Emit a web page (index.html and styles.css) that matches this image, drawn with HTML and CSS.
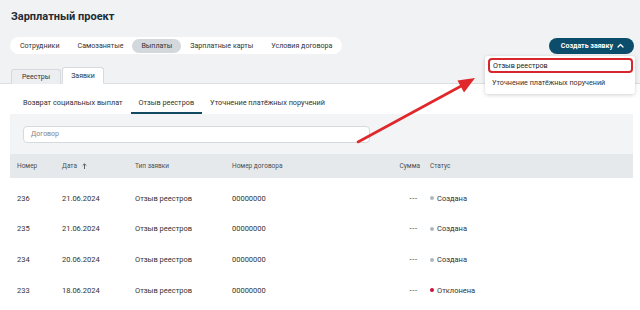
FILE: index.html
```html
<!DOCTYPE html>
<html lang="ru">
<head>
<meta charset="utf-8">
<title>Зарплатный проект</title>
<link rel="stylesheet" href="styles.css">
</head>
<body>
<div class="app">
  <header class="top">
    <h1 class="title">Зарплатный проект</h1>
    <div class="navrow">
      <nav class="seg">
        <span class="seg-item">Сотрудники</span>
        <span class="seg-item">Самозанятые</span>
        <span class="seg-item active">Выплаты</span>
        <span class="seg-item">Зарплатные карты</span>
        <span class="seg-item">Условия договора</span>
      </nav>
      <div class="create-wrap">
        <button class="create">Создать заявку
          <svg class="chev" width="7" height="5" viewBox="0 0 7 5"><path d="M1 4 L3.5 1.5 L6 4" fill="none" stroke="#fff" stroke-width="1.3" stroke-linecap="round" stroke-linejoin="round"/></svg>
        </button>
        <div class="menu">
          <div class="menu-item selected">Отзыв реестров</div>
          <div class="menu-item">Уточнение платёжных поручений</div>
        </div>
      </div>
    </div>
    <div class="tabs">
      <span class="tab">Реестры</span>
      <span class="tab active">Заявки</span>
    </div>
  </header>
  <main class="content">
    <div class="subtabs">
      <span class="subtab">Возврат социальных выплат</span>
      <span class="subtab active">Отзыв реестров</span>
      <span class="subtab">Уточнение платёжных поручений</span>
    </div>
    <div class="filter">
      <div class="input">Договор</div>
    </div>
    <div class="table">
      <div class="row head">
        <span>Номер</span>
        <span class="sort">Дата <svg width="5" height="6" viewBox="0 0 5 6"><path d="M2.5 6 V1 M0.7 2.6 L2.5 0.8 L4.3 2.6" fill="none" stroke="#555" stroke-width="0.9"/></svg></span>
        <span>Тип заявки</span>
        <span>Номер договора</span>
        <span class="num">Сумма</span>
        <span class="status">Статус</span>
      </div>
      <div class="body">
        <div class="row">
          <span>236</span><span>21.06.2024</span><span>Отзыв реестров</span><span>00000000</span><span class="num dashes">---</span><span class="status"><i class="dot"></i>Создана</span>
        </div>
        <div class="row">
          <span>235</span><span>21.06.2024</span><span>Отзыв реестров</span><span>00000000</span><span class="num dashes">---</span><span class="status"><i class="dot"></i>Создана</span>
        </div>
        <div class="row">
          <span>234</span><span>20.06.2024</span><span>Отзыв реестров</span><span>00000000</span><span class="num dashes">---</span><span class="status"><i class="dot"></i>Создана</span>
        </div>
        <div class="row">
          <span>233</span><span>18.06.2024</span><span>Отзыв реестров</span><span>00000000</span><span class="num dashes">---</span><span class="status"><i class="dot red"></i>Отклонена</span>
        </div>
      </div>
    </div>
  </main>
  <svg class="arrow" width="640" height="310" viewBox="0 0 640 310">
    <line x1="358" y1="142" x2="463" y2="85" stroke="#e0282c" stroke-width="2.6" stroke-linecap="round"/>
    <polygon points="475,78 457.5,80.5 464,92.5" fill="#e0282c"/>
  </svg>
</div>
</body>
</html>
```

FILE: styles.css
```css
* { box-sizing: border-box; }
html, body { margin: 0; padding: 0; }
body {
  width: 640px;
  height: 310px;
  overflow: hidden;
  background: #ffffff;
  font-family: Roboto, "Noto Sans", "DejaVu Sans", sans-serif;
  color: #2b2f33;
}
.app { position: relative; width: 640px; height: 310px; }

.top {
  background: #f1f2f4;
  padding: 9px 6px 0 10px;
  border-bottom: 1px solid #dcdfe3;
}
.title {
  margin: 0;
  padding-left: 1px;
  font-size: 11px;
  line-height: 16px;
  font-weight: 700;
  color: #1f2b35;
}
.navrow {
  margin-top: 12px;
  display: flex;
  justify-content: space-between;
  align-items: center;
  height: 17px;
}
.seg {
  display: flex;
  align-items: center;
  height: 17px;
  background: #ffffff;
  border-radius: 9px;
  padding: 0 1px 0 1px;
}
.seg-item {
  font-size: 7.1px;
  line-height: 14px;
  padding: 0 9px;
  border-radius: 8px;
  color: #333;
  white-space: nowrap;
}
.seg-item.active { background: #d3d8dd; }

.create-wrap { position: relative; }
.create {
  display: flex;
  align-items: center;
  gap: 4px;
  height: 16px;
  padding: 0 10px 0 12px;
  border: none;
  border-radius: 8px;
  background: #0d4d6c;
  color: #fff;
  font-family: inherit;
  font-size: 7px;
  font-weight: 700;
  white-space: nowrap;
}
.chev { display: block; }
.menu {
  position: absolute;
  right: -1px;
  top: 18px;
  width: 150px;
  background: #fff;
  border-radius: 3px;
  box-shadow: 0 1px 4px rgba(0,0,0,0.18);
  padding: 2px 2px 3px 3px;
}
.menu-item {
  font-size: 7.2px;
  line-height: 15px;
  padding: 0 4px;
  color: #333;
  white-space: nowrap;
}
.menu-item.selected {
  border: 2px solid #d8262d;
  border-radius: 4px;
  line-height: 11px;
  padding: 0 3px;
  color: #222;
}
.menu-item + .menu-item { line-height: 17px; margin-top: 1px; }

.tabs {
  margin-top: 13px;
  display: flex;
  align-items: flex-end;
  gap: 1px;
  margin-bottom: -1px;
  padding-left: 1px;
}
.tab {
  font-size: 7px;
  line-height: 14px;
  padding: 0 10px;
  height: 15px;
  background: #eceef1;
  border: 1px solid #d6d9dd;
  border-bottom: none;
  border-radius: 3px 3px 0 0;
  color: #333;
}
.tab.active {
  height: 17px;
  line-height: 16px;
  padding: 0 8px;
  background: #ffffff;
  border-bottom: 1px solid #ffffff;
}

.content { padding: 9px 7px 0 10px; }
.subtabs {
  display: flex;
  padding-left: 5px;
  height: 21px;
}
.subtab {
  font-size: 7.3px;
  line-height: 19px;
  padding: 0 8px;
  border-bottom: 2px solid transparent;
  color: #333;
  white-space: nowrap;
}
.subtab.active { border-bottom-color: #124a62; }

.filter {
  background: #f3f4f6;
  height: 40px;
  padding: 12px 0 0 13px;
}
.input {
  width: 347px;
  height: 17px;
  background: #fff;
  border: 1px solid #d7dadd;
  border-radius: 4px;
  font-size: 7px;
  line-height: 15px;
  padding-left: 7px;
  color: #80858a;
}

.row {
  display: grid;
  grid-template-columns: 45px 73px 97px 148px 40px 1fr;
  padding-left: 7px;
  align-items: center;
  height: 30.67px;
  font-size: 7.5px;
  color: #333;
  white-space: nowrap;
}
.row.head {
  height: 24px;
  background: #e6e9eb;
  font-size: 6.5px;
  color: #4a4f55;
}
.body { padding-top: 5px; }
.num { text-align: right; }
.dashes { letter-spacing: 0.8px; padding-right: 2px; }
.status { padding-left: 10px; display: flex; align-items: center; }
.sort { display: flex; align-items: center; gap: 5px; }
.sort svg { display: block; }
.dot {
  display: inline-block;
  width: 4px;
  height: 4px;
  border-radius: 50%;
  background: #b3b7bb;
  margin-right: 3px;
}
.dot.red { background: #cc0f3c; }

.arrow {
  position: absolute;
  left: 0;
  top: 0;
  pointer-events: none;
}
```
